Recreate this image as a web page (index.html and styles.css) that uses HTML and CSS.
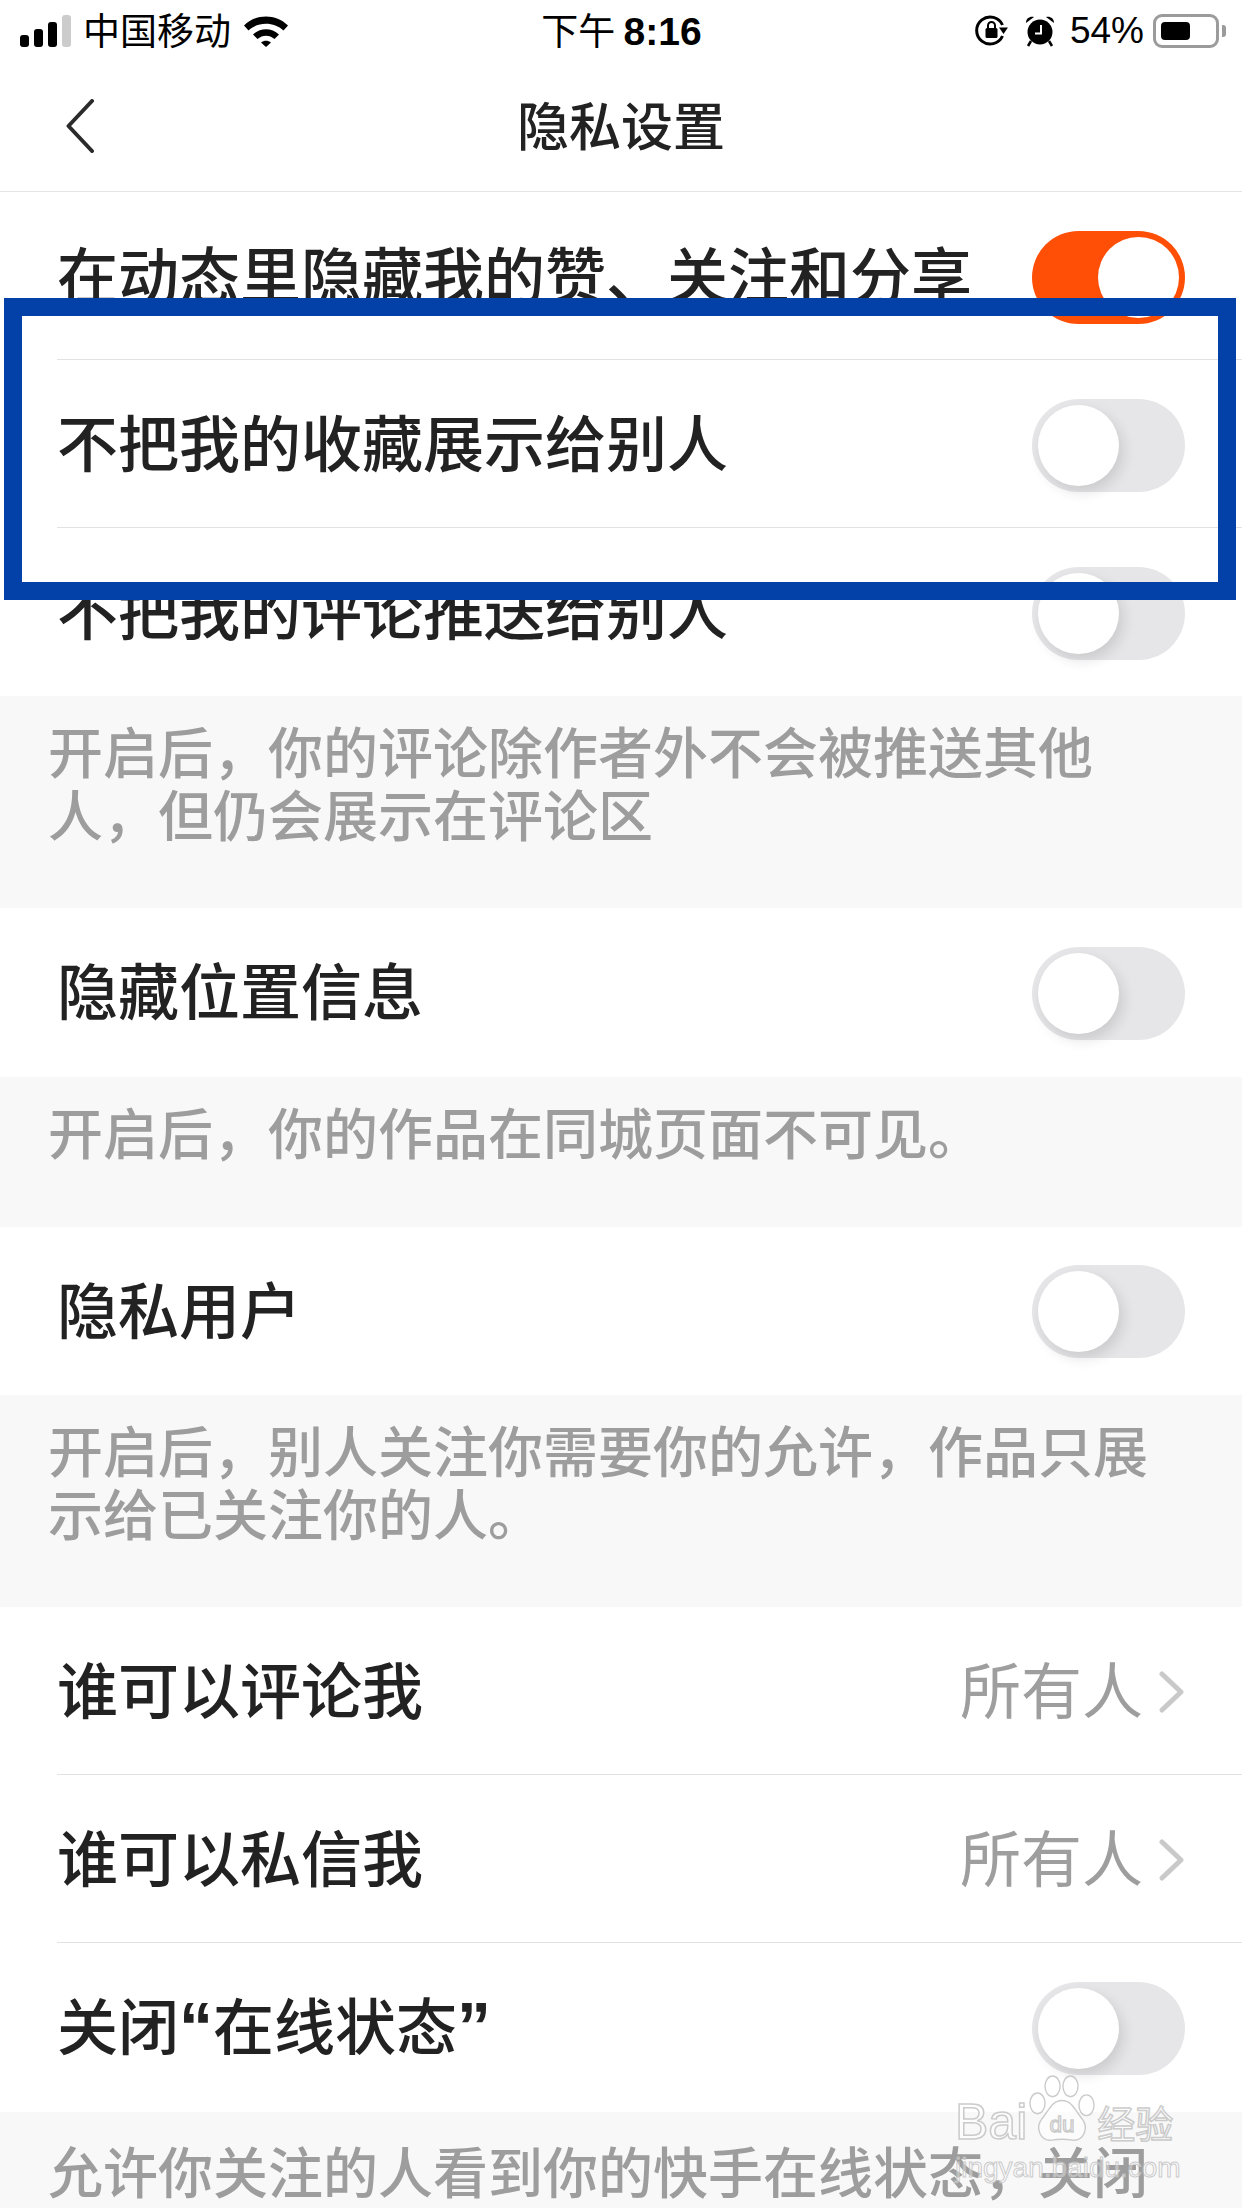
FILE: index.html
```html
<!DOCTYPE html>
<html lang="zh-CN">
<head>
  <meta charset="UTF-8" />
  <meta name="viewport" content="width=device-width, initial-scale=1.0" />
  <title>隐私设置</title>
  <link rel="stylesheet" href="styles.css">
</head>
<body>
  <div class="phone">
    <div class="statusbar">
      <div class="status-left">
        <div class="signal"><i class="b1"></i><i class="b2"></i><i class="b3"></i><i class="b4"></i></div>
        <span class="carrier">中国移动</span>
        <svg class="wifi" viewBox="0 0 46 32"><path d="M1 10.500C13 -1.500 33 -1.500 45 10.500L40.500 15.500C31 6.500 15 6.500 5.500 15.500Z"/><path d="M10 19.500C17.500 12.500 28.500 12.500 36 19.500L31.500 24C26.500 19.500 19.500 19.500 14.500 24Z"/><path d="M18 27.500C21 25 25 25 28 27.500L23 32Z"/></svg>
      </div>
      <div class="status-time">下午 <b>8:16</b></div>
      <div class="status-right">
        <svg class="lock" viewBox="0 0 34 34"><path d="M27.500 22A13.500 13.500 0 1 1 27.500 11" fill="none" stroke="#000" stroke-width="3"/><path d="M33 13.500L24 13.500L28.500 20Z"/><rect x="10.500" y="14" width="12" height="10" rx="1.500"/><path d="M13 14.500V11.500A3.500 3.500 0 0 1 20 11.500V14.500" fill="none" stroke="#000" stroke-width="2"/></svg>
        <svg class="alarm" viewBox="0 0 30 32"><circle cx="15" cy="17" r="12.500"/><path d="M1 8C1 3 5 1 9 2ZM29 8C29 3 25 1 21 2Z"/><path d="M6 26L3 31M24 26L27 31" stroke="#000" stroke-width="2.500"/><path d="M16 10V18.500H10" fill="none" stroke="#fff" stroke-width="2"/></svg>
        <span class="percent">54%</span>
        <div class="battery"><div class="battery-fill"></div></div>
        <div class="battery-nub"></div>
      </div>
    </div>

    <div class="navbar">
      <svg class="back" viewBox="0 0 30 54"><path d="M27 2L3.500 27L27 52" fill="none" stroke="#2b2b2b" stroke-width="4" stroke-linecap="round" stroke-linejoin="round"/></svg>
      <h1 class="title">隐私设置</h1>
    </div>

    <div class="row line"><span class="label">在动态里隐藏我的赞、关注和分享</span><div class="toggle on"></div></div>
    <div class="row line"><span class="label">不把我的收藏展示给别人</span><div class="toggle"></div></div>
    <div class="row"><span class="label">不把我的评论推送给别人</span><div class="toggle"></div></div>
    <div class="hint">开启后，你的评论除作者外不会被推送其他人，但仍会展示在评论区</div>

    <div class="row solo"><span class="label">隐藏位置信息</span><div class="toggle"></div></div>
    <div class="hint">开启后，你的作品在同城页面不可见。</div>

    <div class="row solo"><span class="label">隐私用户</span><div class="toggle"></div></div>
    <div class="hint">开启后，别人关注你需要你的允许，作品只展示给已关注你的人。</div>

    <div class="row line"><span class="label">谁可以评论我</span><div class="value">所有人<svg class="more" viewBox="0 0 26 42"><path d="M3 3L22 21L3 39" fill="none" stroke="#c9c9c9" stroke-width="5" stroke-linecap="round" stroke-linejoin="round"/></svg></div></div>
    <div class="row line"><span class="label">谁可以私信我</span><div class="value">所有人<svg class="more" viewBox="0 0 26 42"><path d="M3 3L22 21L3 39" fill="none" stroke="#c9c9c9" stroke-width="5" stroke-linecap="round" stroke-linejoin="round"/></svg></div></div>
    <div class="row solo"><span class="label">关闭<span class="quote">“</span>在线状态<span class="quote">”</span></span><div class="toggle"></div></div>
    <div class="hint last">允许你关注的人看到你的快手在线状态，关闭后你将看不到他们的在线状态</div>

    <!-- blue marker drawn over the screenshot -->
    <div class="marker"></div>

    <div class="watermark">
      <div class="wm-top">
        <span class="wm-text">Bai</span>
        <svg class="paw" viewBox="0 0 70 72"><ellipse cx="25" cy="12" rx="8" ry="11"/><ellipse cx="44" cy="12" rx="8" ry="11"/><ellipse cx="9" cy="30" rx="8" ry="11"/><ellipse cx="61" cy="32" rx="8" ry="11"/><path d="M35 27C46 27 49 38 56 46C64 56 58 70 46 69C40 68 30 68 24 69C12 70 6 56 14 46C21 38 24 27 35 27Z"/><text x="35" y="60" text-anchor="middle" class="paw-text">du</text></svg>
        <span class="wm-text wm-cn">经验</span>
      </div>
      <div class="wm-url">jingyan.baidu.com</div>
    </div>
  </div>
</body>
</html>
```

FILE: styles.css
```css
html, body {
  margin: 0;
  padding: 0;
}
body {
  width: 1242px;
  height: 2208px;
  overflow: hidden;
  background: #fff;
  font-family: "Noto Sans CJK SC", "Liberation Sans", sans-serif;
  color: #222;
}
.phone {
  position: relative;
  width: 1242px;
  height: 2208px;
  overflow: hidden;
}

/* status bar */
.statusbar {
  height: 62px;
  display: grid;
  grid-template-columns: 1fr auto 1fr;
  align-items: center;
  padding: 0 16px 0 20px;
  box-sizing: border-box;
  color: #000;
  font-size: 36px;
}
.status-left, .status-right {
  display: flex;
  align-items: center;
}
.status-right {
  justify-content: flex-end;
}
.signal {
  display: flex;
  align-items: flex-end;
  gap: 5px;
  height: 32px;
}
.signal i {
  display: block;
  width: 9px;
  border-radius: 3px;
  background: #000;
}
.signal .b1 { height: 12px; }
.signal .b2 { height: 18px; }
.signal .b3 { height: 25px; }
.signal .b4 { height: 32px; background: #ccc; }
.carrier {
  font-size: 37px;
  margin-left: 12px;
  margin-bottom: 5px;
}
.wifi {
  width: 46px;
  height: 32px;
  margin-left: 12px;
}
.status-time {
  font-size: 37px;
  margin-bottom: 5px;
  margin-left: -3px;
}
.status-time b {
  font-family: "Liberation Sans", sans-serif;
  font-size: 39px;
}
.lock {
  width: 34px;
  height: 34px;
}
.alarm {
  width: 30px;
  height: 32px;
  margin-left: 16px;
}
.percent {
  font-family: "Liberation Sans", sans-serif;
  font-size: 37px;
  margin-left: 15px;
  margin-bottom: 1px;
}
.battery {
  width: 66px;
  height: 34px;
  margin-left: 9px;
  padding: 5px;
  box-sizing: border-box;
  border: 3px solid #9b9b9b;
  border-radius: 9px;
}
.battery-fill {
  width: 29px;
  height: 100%;
  background: #000;
  border-radius: 4px;
}
.battery-nub {
  width: 4px;
  height: 12px;
  margin-left: 3px;
  background: #9b9b9b;
  border-radius: 0 3px 3px 0;
}

/* nav */
.navbar {
  height: 130px;
  display: flex;
  align-items: center;
  justify-content: center;
  position: relative;
  box-sizing: border-box;
  border-bottom: 1px solid #e4e4e4;
}
.back {
  position: absolute;
  left: 65px;
  top: 37px;
  width: 30px;
  height: 54px;
}
.title {
  margin: 0 0 6px;
  font-size: 52px;
  font-weight: 500;
  color: #222;
}

/* rows */
.row {
  height: 168px;
  padding: 2px 57px 0 57px;
  box-sizing: border-box;
  display: flex;
  align-items: center;
  justify-content: space-between;
  position: relative;
}
.row.solo {
  height: 168.500px;
}
.row.line::after {
  content: "";
  position: absolute;
  left: 57px;
  right: 0;
  bottom: 0;
  height: 1px;
  background: #e2e2e2;
}
.label {
  font-size: 61px;
  font-weight: 500;
  color: #222;
  white-space: nowrap;
  margin-bottom: 9px;
}
.quote {
  font-family: "Liberation Sans", sans-serif;
  font-size: 68px;
  font-weight: 700;
  line-height: 0;
}
.value {
  display: flex;
  align-items: center;
  font-size: 61px;
  color: #9e9e9e;
  margin-bottom: 9px;
}
.more {
  width: 26px;
  height: 42px;
  margin-left: 16px;
  margin-top: 9px;
}
.toggle {
  width: 153px;
  height: 93px;
  border-radius: 47px;
  background: #e6e6e8;
  padding: 6px;
  box-sizing: border-box;
  flex: none;
}
.toggle::before {
  content: "";
  display: block;
  width: 81px;
  height: 81px;
  border-radius: 50%;
  background: #fff;
  box-shadow: 4px 6px 14px rgba(0, 0, 0, 0.12);
}
.toggle.on {
  background: #ff4e06;
}
.toggle.on::before {
  margin-left: 60px;
  box-shadow: none;
}

/* hints */
.hint {
  background: #f8f8f8;
  padding: 22px 40px 64px 48px;
  min-height: 150px;
  box-sizing: border-box;
  font-size: 55px;
  font-weight: 500;
  line-height: 63px;
  color: #9d9d9d;
}
.hint.last {
  padding-top: 26px;
}

/* overlays */
.marker {
  position: absolute;
  left: 4px;
  top: 298px;
  width: 1232px;
  height: 302px;
  box-sizing: border-box;
  border: 18px solid #0340a8;
}
.watermark {
  position: absolute;
  left: 955px;
  top: 2075px;
  width: 222px;
}
.wm-top {
  display: flex;
  align-items: flex-end;
}
.wm-text {
  font-family: "Liberation Sans", sans-serif;
  font-size: 50px;
  line-height: 42px;
  color: rgba(255, 255, 255, 0.55);
  -webkit-text-stroke: 1.500px rgba(190, 190, 190, 0.8);
}
.wm-cn {
  font-family: "Noto Sans CJK SC", sans-serif;
  font-size: 38px;
}
.paw {
  width: 66px;
  height: 68px;
  margin: 0 2px;
  fill: rgba(255, 255, 255, 0.55);
  stroke: rgba(190, 190, 190, 0.8);
  stroke-width: 1.500;
}
.paw-text {
  font-family: "Liberation Sans", sans-serif;
  font-size: 24px;
}
.wm-url {
  font-family: "Liberation Sans", sans-serif;
  font-size: 28px;
  line-height: 34px;
  margin-top: 8px;
  white-space: nowrap;
  color: rgba(255, 255, 255, 0.4);
  -webkit-text-stroke: 1px rgba(190, 190, 190, 0.8);
}
```
